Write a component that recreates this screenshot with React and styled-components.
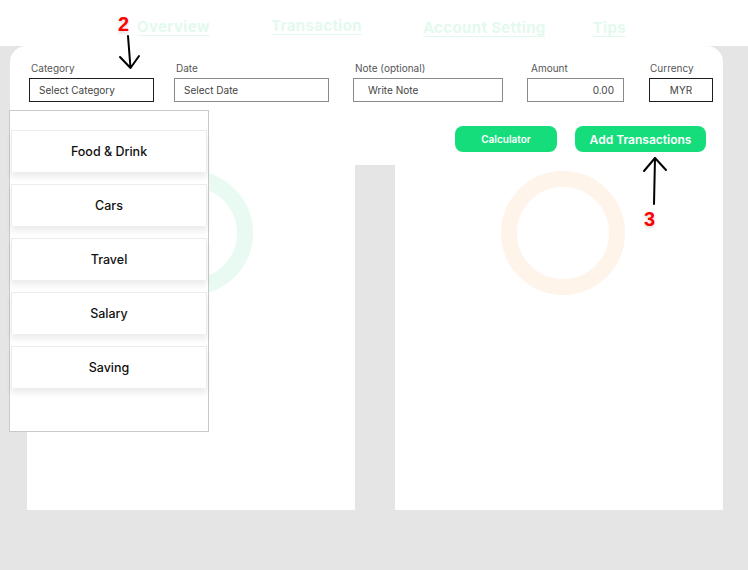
import React from "react";
import styled, { createGlobalStyle } from "styled-components";

const GlobalStyle = createGlobalStyle`
  * {
    box-sizing: border-box;
  }
  body {
    margin: 0;
    background: #e5e5e5;
    font-family: Inter, "Open Sans", sans-serif;
  }
`;

const Page = styled.div`
  position: relative;
  width: 748px;
  height: 570px;
  background: #e5e5e5;
  overflow: hidden;
`;

const Header = styled.header`
  height: 46px;
  background: #fff;
`;

const Nav = styled.nav`
  display: flex;
  align-items: flex-start;
  padding-left: 137px;
`;

const NavLink = styled.a`
  margin-top: ${(props) => props.top}px;
  margin-right: ${(props) => props.gap}px;
  font-size: 15px;
  font-weight: 700;
  letter-spacing: 0.35px;
  color: #e4f9ee;
  text-decoration: underline;
  text-underline-offset: 3px;
  cursor: pointer;
`;

const Main = styled.main`
  padding-left: 10px;
`;

const FormPanel = styled.section`
  width: 713px;
  height: 119px;
  background: #fff;
  border-radius: 16px 16px 0 0;
  padding: 16px 17px 0 19px;
`;

const Fields = styled.div`
  display: flex;
  align-items: flex-end;
`;

const Field = styled.label`
  display: flex;
  flex-direction: column;
  flex-shrink: 0;
  width: ${(props) => props.width}px;
  margin-right: ${(props) => props.gap || 0}px;
`;

const Label = styled.span`
  font-size: 10px;
  color: #555;
  padding-left: ${(props) => props.indent || 2}px;
  margin-bottom: 4px;
`;

const Input = styled.div`
  height: 24px;
  display: flex;
  align-items: center;
  justify-content: ${(props) => props.align || "flex-start"};
  padding: 0 ${(props) => props.pad || 9}px;
  border: ${(props) => (props.dark ? "1.5px solid #1e1e1e" : "1.5px solid #8a8a8a")};
  font-size: 10px;
  color: #444;
  background: #fff;
`;

const Actions = styled.div`
  display: flex;
  justify-content: flex-end;
  gap: 18px;
  margin-top: 24px;
`;

const Button = styled.button`
  height: 26px;
  width: ${(props) => (props.big ? 131 : 102)}px;
  padding: 0;
  border: none;
  border-radius: 8px;
  background: #16dd7c;
  color: #fff;
  font-family: inherit;
  font-size: ${(props) => (props.big ? 12 : 10)}px;
  font-weight: 600;
  cursor: pointer;
`;

const Cards = styled.div`
  display: flex;
  gap: 40px;
  padding-left: 17px;
`;

const Card = styled.div`
  width: 328px;
  height: 345px;
  background: #fff;
  padding-top: 6px;
  padding-left: ${(props) => props.shift}px;
`;

const Ring = styled.div`
  width: 124px;
  height: 124px;
  border-radius: 50%;
  border: 16px solid ${(props) => props.color};
`;

const Dropdown = styled.div`
  position: absolute;
  left: 9px;
  top: 110px;
  width: 200px;
  height: 322px;
  background: #fff;
  border: 1px solid #c9c9c9;
  padding: 19px 1px 0 1px;
  display: flex;
  flex-direction: column;
  gap: 12px;
`;

const Option = styled.div`
  height: 42px;
  display: flex;
  align-items: center;
  justify-content: center;
  border: 1px solid #ececec;
  border-bottom: none;
  box-shadow: 0 5px 6px rgba(0, 0, 0, 0.08);
  font-size: 12.5px;
  font-weight: 500;
  color: #111;
  background: #fff;
`;

const Marker = styled.div`
  position: absolute;
  left: ${(props) => props.x}px;
  top: ${(props) => props.y}px;
  font-family: "Liberation Sans", Arial, sans-serif;
  font-size: 20px;
  font-weight: 700;
  color: #f00;
  text-shadow: 0 2px 3px rgba(0, 0, 0, 0.15);
`;

const Arrow = styled.svg`
  position: absolute;
  left: ${(props) => props.x}px;
  top: ${(props) => props.y}px;
`;

const fields = [
  { label: "Category", value: "Select Category", width: 125, gap: 20, dark: true },
  { label: "Date", value: "Select Date", width: 155, gap: 24 },
  { label: "Note (optional)", value: "Write Note", width: 150, gap: 24, pad: 14, indent: 0 },
  { label: "Amount", value: "0.00", width: 97, gap: 25, align: "flex-end", indent: 4 },
  { label: "Currency", value: "MYR", width: 64, dark: true, align: "center", indent: 1 },
];

const categories = ["Food & Drink", "Cars", "Travel", "Salary", "Saving"];

const App = () => (
  <Page>
    <GlobalStyle />
    <Header>
      <Nav>
        <NavLink top={17} gap={61}>Overview</NavLink>
        <NavLink top={16} gap={61}>Transaction</NavLink>
        <NavLink top={18} gap={47}>Account Setting</NavLink>
        <NavLink top={18} gap={0}>Tips</NavLink>
      </Nav>
    </Header>
    <Main>
      <FormPanel>
        <Fields>
          {fields.map((f) => (
            <Field key={f.label} width={f.width} gap={f.gap}>
              <Label indent={f.indent}>{f.label}</Label>
              <Input dark={f.dark} align={f.align} pad={f.pad}>
                {f.value}
              </Input>
            </Field>
          ))}
        </Fields>
        <Actions>
          <Button>Calculator</Button>
          <Button big>Add Transactions</Button>
        </Actions>
      </FormPanel>
      <Cards>
        <Card shift={102}>
          <Ring color="#e9faf2" />
        </Card>
        <Card shift={106}>
          <Ring color="#fff4ea" />
        </Card>
      </Cards>
    </Main>

    <Dropdown>
      {categories.map((c) => (
        <Option key={c}>{c}</Option>
      ))}
    </Dropdown>

    <Marker x={118} y={13}>2</Marker>
    <Arrow x={116} y={34} width={28} height={38} viewBox="0 0 28 38">
      <path
        d="M12 2 L14.5 34 M4 23 L14.5 34 L23 22"
        fill="none"
        stroke="#000"
        strokeWidth="2"
        strokeLinecap="round"
        strokeLinejoin="round"
      />
    </Arrow>

    <Marker x={644} y={208}>3</Marker>
    <Arrow x={640} y={154} width={30} height={54} viewBox="0 0 30 54">
      <path
        d="M14 50 L15 4 M4 17 L15 4 L26 16"
        fill="none"
        stroke="#000"
        strokeWidth="2"
        strokeLinecap="round"
        strokeLinejoin="round"
      />
    </Arrow>
  </Page>
);

export default App;
